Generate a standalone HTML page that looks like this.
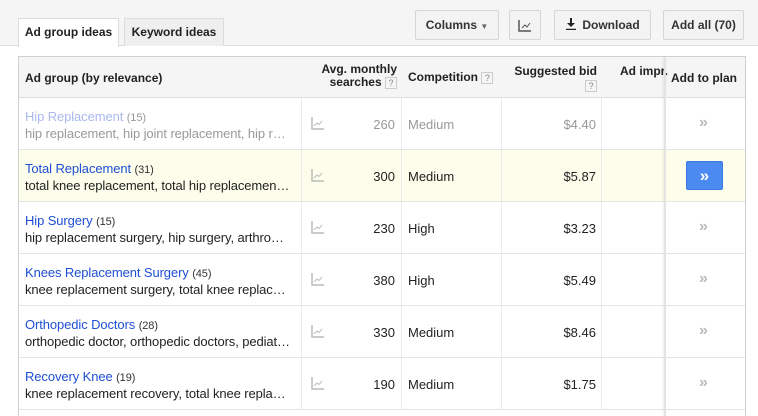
<!DOCTYPE html>
<html><head><style>
*{box-sizing:border-box;margin:0;padding:0}
body{width:758px;height:406px;overflow:hidden;background:#fff;font-family:"Liberation Sans",Arial,sans-serif;font-size:13px;color:#222;position:relative}
.top{position:absolute;left:0;top:0;width:758px;height:46px;background:#f5f5f5;border-bottom:1px solid #dcdcdc}
.tab{position:absolute;top:18px;height:28px;border:1px solid #dcdcdc;border-bottom:none;font-weight:bold;font-size:12px;text-align:center;line-height:27px;background:#efefef}
.tab.on{background:#fff;height:29px}
.btn{position:absolute;top:10px;height:30px;border:1px solid #d6d6d6;border-radius:2px;background:#f3f3f3;font-weight:bold;font-size:12px;line-height:28px;text-align:center;color:#333}
.tbl{position:absolute;left:18px;top:56px;width:728px;border:1px solid #d0d0d0;border-bottom:none;height:360px}
.hdr{position:absolute;left:0;top:0;width:100%;height:41px;background:#f5f5f5;border-bottom:1px solid #ddd;font-weight:bold;font-size:12px}
.row{position:absolute;left:0;width:100%;height:52px;border-bottom:1px solid #e5e5e5}
.v{position:absolute;top:0;bottom:0;border-left:1px solid #ebebeb}
.c{position:absolute}
.q{display:inline-block;width:12px;height:12px;border:1px solid #ccc;font-size:9px;line-height:10px;text-align:center;color:#888;font-weight:normal;vertical-align:middle}
.ic{position:absolute;left:9px;top:19px}
.ch{color:#bbb;font-weight:bold;font-size:16px}
</style></head><body>
<div class="top"></div>
<div class="tab on" style="left:18px;width:101px">Ad group ideas</div>
<div class="tab" style="left:124px;width:100px">Keyword ideas</div>
<div class="btn" style="left:415px;width:84px">Columns <span style="font-size:8px;color:#666">▼</span></div>
<div class="btn" style="left:509px;width:32px"><svg width="14" height="12" style="margin-top:9px" viewBox="0 0 14 12"><path d="M1 0V11H13" stroke="#555" fill="none" stroke-width="1.5"/><path d="M4 8L7 5L9 7L12 3" stroke="#555" fill="none"/></svg></div>
<div class="btn" style="left:554px;width:97px"><svg width="12" height="12" viewBox="0 0 12 12" style="vertical-align:-1px;margin-right:5px"><path d="M6 0V7" stroke="#222" stroke-width="2"/><path d="M2 5L6 9L10 5Z" fill="#222"/><path d="M1 11.5H11" stroke="#222" stroke-width="1.5"/></svg>Download</div>
<div class="btn" style="left:663px;width:81px">Add all (70)</div>
<div class="tbl">
<div class="hdr">
<div class="c" style="left:6px;top:14px">Ad group (by relevance)</div>
<div class="c" style="left:283px;top:6px;width:95px;text-align:right;line-height:13px">Avg. monthly<br>searches <span class="q">?</span></div>
<div class="c" style="left:389px;top:13px">Competition <span class="q">?</span></div>
<div class="c" style="left:483px;top:7px;width:95px;text-align:right;line-height:14px">Suggested bid<br><span class="q">?</span></div>
<div class="c" style="left:601px;top:7px">Ad impr.</div>
<div class="c" style="left:652px;top:14px">Add to plan</div>
</div>
<div id="rows"></div>
<div style="position:absolute;left:645px;top:0;bottom:0;border-left:2px solid #e3e3e3;box-shadow:-1px 0 2px rgba(0,0,0,.08)"></div>
</div>
<script>
var d=[["Hip Replacement","15","hip replacement, hip joint replacement, hip r…","260","Medium","$4.40",1],
["Total Replacement","31","total knee replacement, total hip replacemen…","300","Medium","$5.87",2],
["Hip Surgery","15","hip replacement surgery, hip surgery, arthro…","230","High","$3.23",0],
["Knees Replacement Surgery","45","knee replacement surgery, total knee replac…","380","High","$5.49",0],
["Orthopedic Doctors","28","orthopedic doctor, orthopedic doctors, pediat…","330","Medium","$8.46",0],
["Recovery Knee","19","knee replacement recovery, total knee repla…","190","Medium","$1.75",0]];
var h="";
d.forEach(function(r,i){
var top=41+i*52,bg=r[6]==2?"#fdfdeb":"#fff",col=r[6]==1?"#999":"#222",nc=r[6]==1?"#a9b8ec":"#1f4fd6";
h+='<div class="row" style="top:'+top+'px;background:'+bg+'">'+
'<div class="c" style="left:6px;top:11px;line-height:15px;white-space:nowrap;letter-spacing:-0.1px"><span style="color:'+nc+'">'+r[0]+'</span> <span style="font-size:11px;color:'+(r[6]==1?'#999':'#333')+'">('+r[1]+')</span><br><span style="color:'+col+'">'+r[2]+'</span></div>'+
'<div class="v" style="left:282px"><svg class="ic" width="13" height="13" viewBox="0 0 13 13"><path d="M1 0V12H13" stroke="#bbb" fill="none" stroke-width="1.5"/><path d="M3 9L6 6L8 7.5L11 4" stroke="#bbb" fill="none"/></svg></div>'+
'<div class="c" style="left:282px;width:94px;text-align:right;top:19px;color:'+col+'">'+r[3]+'</div>'+
'<div class="v" style="left:382px"></div><div class="c" style="left:389px;top:19px;color:'+col+'">'+r[4]+'</div>'+
'<div class="v" style="left:482px"></div><div class="c" style="left:482px;width:95px;text-align:right;top:19px;color:'+col+'">'+r[5]+'</div>'+
'<div class="v" style="left:582px"></div>'+
(r[6]==2?'<div class="c" style="left:667px;top:11px;width:37px;height:29px;background:#4b8af0;border:1px solid #3b78e0;border-radius:2px;color:#fff;font-weight:bold;text-align:center;line-height:27px;font-size:17px">»</div>':'<div class="c ch" style="left:680px;top:16px">»</div>')+
'</div>';});
document.getElementById("rows").innerHTML=h;
</script>
</body></html>
